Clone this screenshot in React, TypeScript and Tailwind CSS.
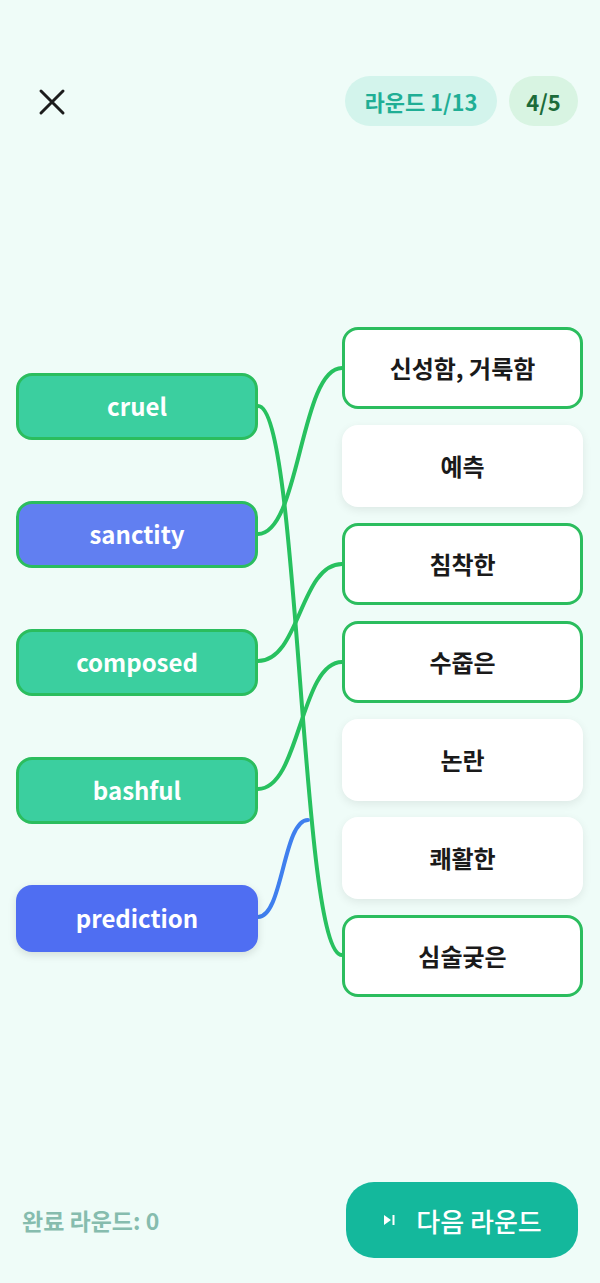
import React from "react";

const font = { fontFamily: '"Noto Sans CJK KR", "Noto Sans", sans-serif' };

type Left = { label: string; kind: "matched" | "selected" | "active" };
const lefts: Left[] = [
  { label: "cruel", kind: "matched" },
  { label: "sanctity", kind: "selected" },
  { label: "composed", kind: "matched" },
  { label: "bashful", kind: "matched" },
  { label: "prediction", kind: "active" },
];

const rights: { label: string; matched: boolean }[] = [
  { label: "신성함, 거룩함", matched: true },
  { label: "예측", matched: false },
  { label: "침착한", matched: true },
  { label: "수줍은", matched: true },
  { label: "논란", matched: false },
  { label: "쾌활한", matched: false },
  { label: "심술궂은", matched: true },
];

function curve(x1: number, y1: number, x2: number, y2: number) {
  const mx = (x1 + x2) / 2;
  return `M ${x1} ${y1} C ${mx} ${y1}, ${mx} ${y2}, ${x2} ${y2}`;
}

export default function App() {
  return (
    <div
      className="w-[600px] h-[1283px] bg-[#effcf8] flex flex-col overflow-hidden"
      style={font}
    >
      {/* header */}
      <div className="flex items-center justify-between pl-[38px] pr-[22px] pt-[76px]">
        <svg width="28" height="28" viewBox="0 0 28 28" className="mt-[2px]">
          <path d="M3 3 L25 25 M25 3 L3 25" stroke="#1c1c1c" strokeWidth="3" strokeLinecap="round" />
        </svg>
        <div className="flex items-center gap-[12px]">
          <div className="h-[50px] w-[152px] rounded-full bg-[#d3f4ec] flex items-center justify-center text-[22px] font-semibold text-[#1fae95]">
            라운드 1/13
          </div>
          <div className="h-[50px] w-[69px] rounded-full bg-[#d8f4e2] flex items-center justify-center text-[22px] font-semibold text-[#1c6b3a]">
            4/5
          </div>
        </div>
      </div>

      {/* match area */}
      <div className="relative mt-[201px] flex items-center justify-between pl-[16px] pr-[17px]">
        <svg
          className="absolute left-0 top-0 pointer-events-none"
          width="600"
          height="669"
          viewBox="0 0 600 669"
          fill="none"
        >
          <path d={curve(258, 79, 342, 628)} stroke="#27c15f" strokeWidth="4" strokeLinecap="round" />
          <path d={curve(258, 207, 342, 41)} stroke="#27c15f" strokeWidth="4" strokeLinecap="round" />
          <path d={curve(258, 334, 342, 237)} stroke="#27c15f" strokeWidth="4" strokeLinecap="round" />
          <path d={curve(258, 462, 342, 335)} stroke="#27c15f" strokeWidth="4" strokeLinecap="round" />
          <path d={curve(258, 590, 308, 493)} stroke="#3f7fee" strokeWidth="4" strokeLinecap="round" />
        </svg>

        <div className="relative flex flex-col gap-[61px] w-[242px]">
          {lefts.map((l) => {
            const cls =
              l.kind === "matched"
                ? "bg-[#3bcf9f] border-[3px] border-[#2bbd5e]"
                : l.kind === "selected"
                ? "bg-[#617ff1] border-[3px] border-[#2bbd5e]"
                : "bg-[#4f6ef2] shadow-[0_3px_8px_rgba(0,0,0,0.12)]";
            return (
              <div
                key={l.label}
                className={`h-[67px] rounded-[16px] flex items-center justify-center text-white text-[24px] font-semibold ${cls}`}
              >
                {l.label}
              </div>
            );
          })}
        </div>

        <div className="relative flex flex-col gap-[16px] w-[241px]">
          {rights.map((r) => (
            <div
              key={r.label}
              className={`h-[82px] rounded-[16px] bg-white flex items-center justify-center text-[24px] font-bold text-[#1a1a1a] ${
                r.matched
                  ? "border-[3px] border-[#2bbd5e]"
                  : "shadow-[0_3px_10px_rgba(0,0,0,0.08)]"
              }`}
            >
              {r.label}
            </div>
          ))}
        </div>
      </div>

      <div className="flex-1" />

      {/* footer */}
      <div className="flex items-center justify-between pl-[22px] pr-[22px] pb-[25px]">
        <div className="text-[23px] font-semibold text-[#86bcae]">완료 라운드: 0</div>
        <div className="h-[76px] w-[232px] rounded-[28px] bg-[#14b89c] flex items-center justify-center gap-[20px] text-white text-[26px] font-medium">
          <svg width="14" height="14" viewBox="0 0 14 14">
            <path d="M2 2 L9 7 L2 12 Z" fill="white" />
            <rect x="10.5" y="2" width="2" height="10" fill="white" />
          </svg>
          <span>다음 라운드</span>
        </div>
      </div>
    </div>
  );
}
